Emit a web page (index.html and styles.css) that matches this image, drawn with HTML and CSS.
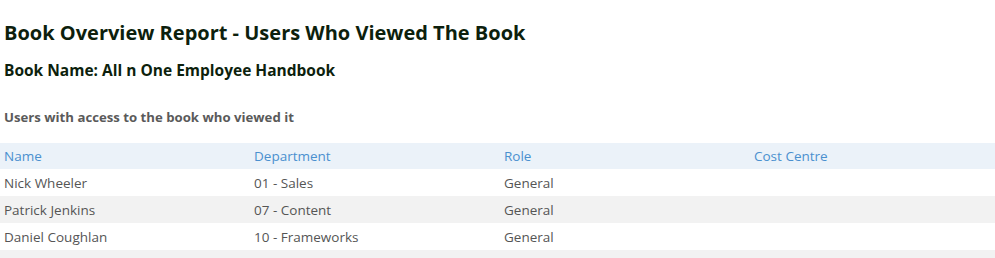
FILE: index.html
```html
<!DOCTYPE html>
<html>
<head>
<meta charset="utf-8">
<link rel="stylesheet" href="styles.css">
</head>
<body>
<div class="report">
  <h1 class="title">Book Overview Report - Users Who Viewed The Book</h1>
  <h2 class="book-name">Book Name: All n One Employee Handbook</h2>
  <h3 class="section">Users with access to the book who viewed it</h3>
  <div class="table">
    <div class="row head">
      <div class="cell">Name</div>
      <div class="cell">Department</div>
      <div class="cell">Role</div>
      <div class="cell">Cost Centre</div>
    </div>
    <div class="row">
      <div class="cell">Nick Wheeler</div>
      <div class="cell">01 - Sales</div>
      <div class="cell">General</div>
      <div class="cell"></div>
    </div>
    <div class="row alt">
      <div class="cell">Patrick Jenkins</div>
      <div class="cell">07 - Content</div>
      <div class="cell">General</div>
      <div class="cell"></div>
    </div>
    <div class="row">
      <div class="cell">Daniel Coughlan</div>
      <div class="cell">10 - Frameworks</div>
      <div class="cell">General</div>
      <div class="cell"></div>
    </div>
    <div class="row alt">
      <div class="cell"></div>
      <div class="cell"></div>
      <div class="cell">General</div>
      <div class="cell"></div>
    </div>
  </div>
</div>
</body>
</html>
```
FILE: styles.css
```css
html, body {
  margin: 0;
  padding: 0;
  background: #ffffff;
  overflow: hidden;
}
body {
  font-family: "Open Sans", "Liberation Sans", sans-serif;
  color: #555555;
}
.report {
  width: 995px;
  padding-top: 20px;
}
.title {
  margin: 0 0 14px 4px;
  font-size: 20px;
  line-height: 26px;
  font-weight: 700;
  color: #0d1f0d;
}
.book-name {
  margin: 0 0 28px 4px;
  font-size: 15.5px;
  line-height: 20px;
  font-weight: 700;
  color: #0d1f0d;
}
.section {
  margin: 0 0 17px 4px;
  font-size: 13.2px;
  line-height: 18px;
  font-weight: 700;
  color: #5a5a5a;
}
.table {
  display: flex;
  flex-direction: column;
}
.row {
  display: grid;
  grid-template-columns: 250px 250px 250px 1fr;
  height: 27px;
  align-items: center;
  font-size: 13.5px;
}
.row.head {
  height: 26px;
  background: #ebf2f9;
  color: #4a90cf;
}
.row.alt {
  background: #f2f2f2;
}
.cell {
  padding-left: 4px;
  white-space: nowrap;
}
```
